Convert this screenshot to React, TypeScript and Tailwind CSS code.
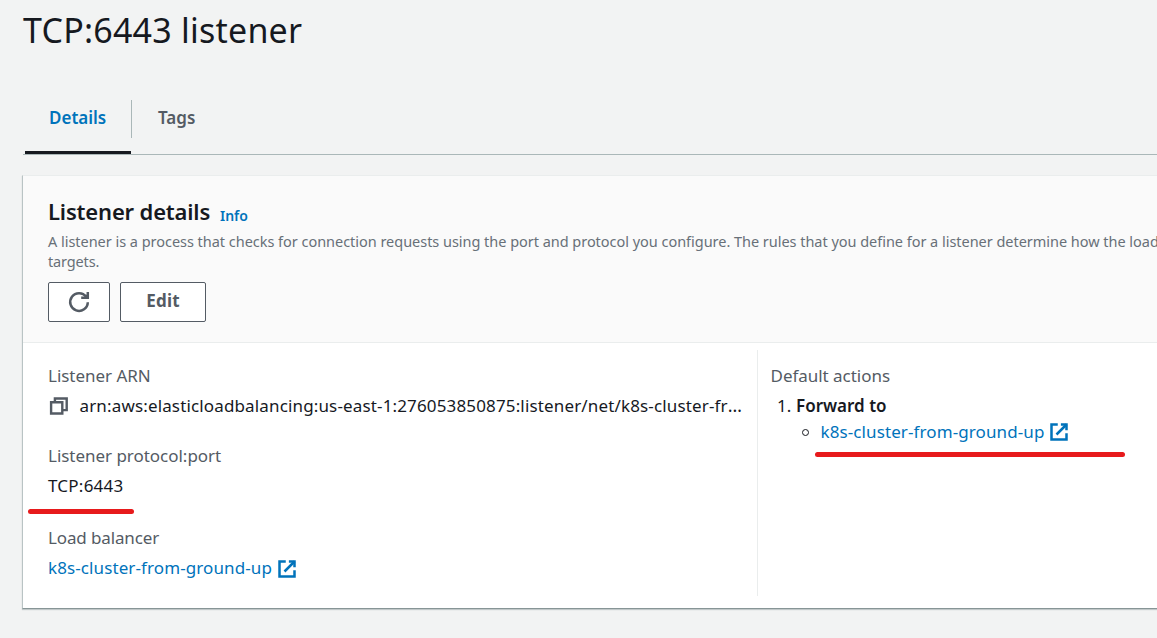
import type { ReactNode } from "react";

function ExternalIcon({ className = "" }: { className?: string }) {
  return (
    <svg width="20" height="20" viewBox="0 0 16 16" fill="none" stroke="currentColor" strokeWidth="2" className={`shrink-0 ${className}`}>
      <path d="M9.5 2H14v4.5" />
      <path d="M6 10l8-8" />
      <path d="M14 9.048V14H2V2h5" />
    </svg>
  );
}

function RefreshIcon() {
  return (
    <svg width="24" height="24" viewBox="0 0 24 24" fill="none" stroke="currentColor" strokeWidth="2.5">
      <path d="M20.8 12.2A8.8 8.8 0 1 1 19.2 7" />
      <path d="M20.8 2v5.8h-6.6" />
      <path d="M18.2 5.2l2.4 2.2" />
    </svg>
  );
}

function CopyIcon() {
  return (
    <svg width="20" height="20" viewBox="0 0 20 20" fill="none" stroke="currentColor" strokeWidth="2.4" className="shrink-0">
      <path d="M3.1 6.2h11.2v11.3H3.1z" />
      <path d="M6.9 6V2.5h11.8v11.6h-4" />
    </svg>
  );
}

function Label({ children }: { children: ReactNode }) {
  return <div className="h-[26px] leading-[26px] tracking-[-0.03px] text-[#545b64]">{children}</div>;
}

function TargetLink({ iconClass }: { iconClass?: string }) {
  return (
    <a href="#" className="flex h-[26px] items-center text-[#0073bb]">
      <span className="w-[228.5px] leading-[26px] tracking-[0.1px]">k8s-cluster-from-ground-up</span>
      <ExternalIcon className={iconClass} />
    </a>
  );
}

export default function App() {
  return (
    <div className="h-[638px] w-full overflow-hidden bg-[#f2f3f3] pt-2 font-['Noto_Sans',sans-serif] text-[17px] text-[#16191f]">
      <h1 className="ml-[23px] text-[34px] leading-[44px] tracking-[0.22px]">TCP:6443 listener</h1>

      <nav className="ml-[23px] mt-12 flex h-[55px] border-b border-[#aab7b8] font-semibold leading-[26px]">
        <div className="ml-0.5 flex h-[54px] w-[106px] flex-col border-b-[3px] border-[#16191f] pl-6 pt-[5px] text-[#0073bb]">
          Details
        </div>
        <div className="h-[38px] w-px bg-[#aab7b8]" />
        <div className="pl-[26px] pt-[5px] text-[#545b64]">Tags</div>
      </nav>

      <section className="ml-[22px] mt-5 h-[434px] border-b border-l border-t border-b-[#879596] border-l-[#b9c3c4] border-t-[#eaeded] bg-white shadow-[0_1px_1px_0_rgba(0,28,36,0.2)]">
        <header className="h-[167px] border-b border-[#eaeded] bg-[#fafafa] pl-[25px] pt-[21px]">
          <div className="flex h-[34px] items-baseline">
            <h2 className="w-[172px] text-[22px] font-semibold leading-[28px] tracking-[-0.17px]">Listener details</h2>
            <a href="#" className="translate-y-px text-sm font-semibold text-[#0073bb]">Info</a>
          </div>
          <p className="whitespace-nowrap text-[14.5px] leading-[20px] tracking-[-0.03px] text-[#687078]">
            A listener is a process that checks for connection requests using the port and protocol you configure. The rules that you define for a listener determine how the load
            <br />
            <span className="tracking-[-0.15px]">targets.</span>
          </p>
          <div className="mt-[11px] flex gap-2.5 text-[#545b64]">
            <button className="flex h-10 w-[62px] items-center justify-center rounded-xs border border-[#545b64] bg-white">
              <RefreshIcon />
            </button>
            <button className="h-10 w-[86px] rounded-xs border border-[#545b64] bg-white pb-0.5 font-bold tracking-[0.2px]">Edit</button>
          </div>
        </header>

        <div className="flex pt-[7px]">
          <div className="h-[246px] w-[735px] border-r border-[#eaeded] pl-[25px] pt-[13px]">
            <Label>Listener ARN</Label>
            <div className="mt-1 flex h-[26px] items-center">
              <span className="w-[31.5px] text-[#545b64]"><CopyIcon /></span>
              <span className="whitespace-nowrap leading-[26px] tracking-[0.147px]">
                arn:aws:elasticloadbalancing:us-east-1:276053850875:listener/net/k8s-cluster-fr<span className="text-[18px] leading-none">…</span>
              </span>
            </div>
            <div className="relative mt-6">
              <Label>Listener protocol:port</Label>
              <div className="mt-1 leading-[26px] tracking-[0.24px]">TCP:6443</div>
              <div className="absolute -left-5 top-[66px] h-[5px] w-[105.5px] rounded-full bg-[#e71a1c]" />
            </div>
            <div className="mt-[26px]">
              <Label><span className="tracking-[-0.13px]">Load balancer</span></Label>
              <div className="mt-1"><TargetLink iconClass="mt-0.5" /></div>
            </div>
          </div>

          <div className="relative pl-[12.5px] pt-[13px]">
            <Label>Default actions</Label>
            <div className="mt-1 flex leading-[26px]">
              <span className="w-[25.5px] pl-[6.5px]">1.</span>
              <b className="font-semibold">Forward to</b>
            </div>
            <div className="flex items-center pl-[31.5px]">
              <span className="mr-[11.5px] size-[7px] rounded-full border border-[#16191f]" />
              <TargetLink />
            </div>
            <div className="absolute left-[57px] top-[102px] h-[5px] w-[310px] rounded-full bg-[#e71a1c]" />
          </div>
        </div>
      </section>
    </div>
  );
}
